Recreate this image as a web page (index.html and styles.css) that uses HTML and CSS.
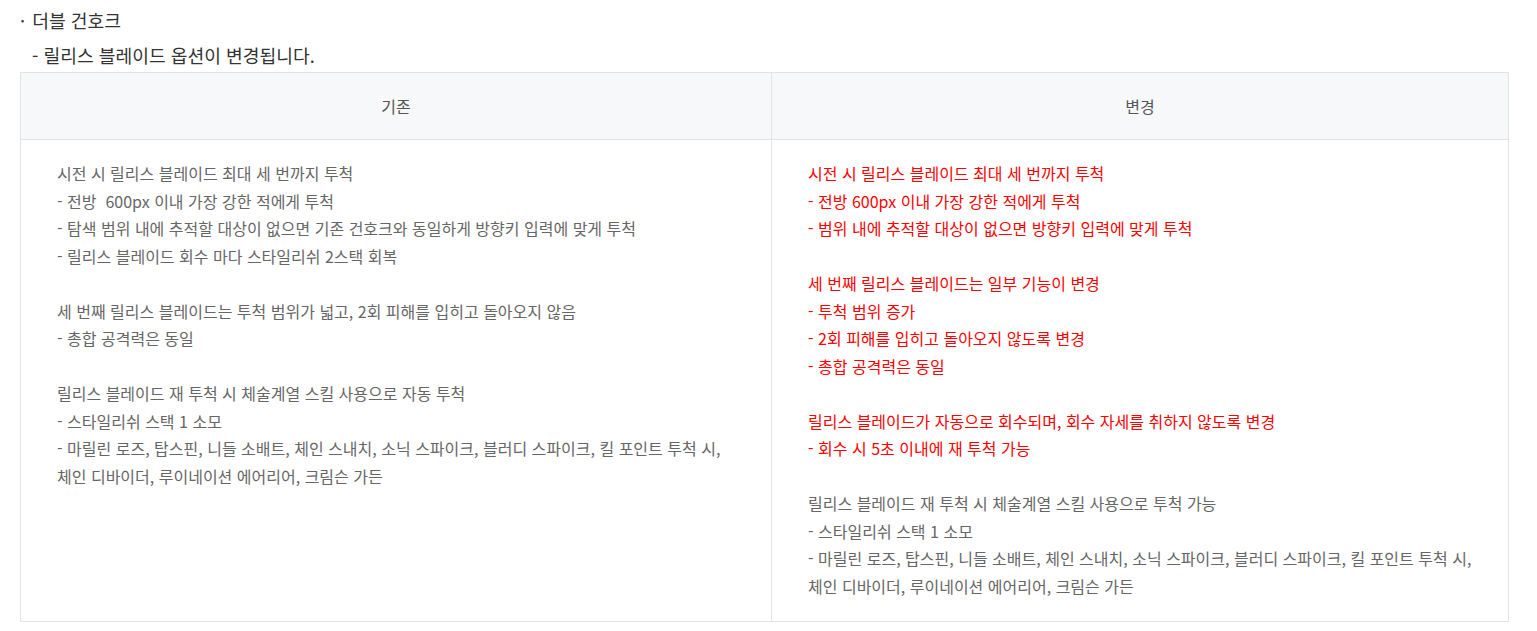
FILE: index.html
```html
<!DOCTYPE html>
<html lang="ko">
<head>
<meta charset="utf-8">
<link rel="stylesheet" href="styles.css">
</head>
<body>
<div class="wrap">
  <p class="title"><span class="dot">·</span> 더블 건호크</p>
  <p class="sub">- 릴리스 블레이드 옵션이 변경됩니다.</p>
  <table class="cmp">
    <thead>
      <tr><th class="col-a">기존</th><th>변경</th></tr>
    </thead>
    <tbody>
      <tr>
        <td class="col-a">
          <p>시전 시 릴리스 블레이드 최대 세 번까지 투척</p>
          <p>- 전방&nbsp; 600px 이내 가장 강한 적에게 투척</p>
          <p>- 탐색 범위 내에 추적할 대상이 없으면 기존 건호크와 동일하게 방향키 입력에 맞게 투척</p>
          <p>- 릴리스 블레이드 회수 마다 스타일리쉬 2스택 회복</p>
          <p>&nbsp;</p>
          <p>세 번째 릴리스 블레이드는 투척 범위가 넓고, 2회 피해를 입히고 돌아오지 않음</p>
          <p>- 총합 공격력은 동일</p>
          <p>&nbsp;</p>
          <p>릴리스 블레이드 재 투척 시 체술계열 스킬 사용으로 자동 투척</p>
          <p>- 스타일리쉬 스택 1 소모</p>
          <p>- 마릴린 로즈, 탑스핀, 니들 소배트, 체인 스내치, 소닉 스파이크, 블러디 스파이크, 킬 포인트 투척 시,<br>체인 디바이더, 루이네이션 에어리어, 크림슨 가든</p>
        </td>
        <td>
          <p class="red">시전 시 릴리스 블레이드 최대 세 번까지 투척</p>
          <p class="red">- 전방 600px 이내 가장 강한 적에게 투척</p>
          <p class="red">- 범위 내에 추적할 대상이 없으면 방향키 입력에 맞게 투척</p>
          <p>&nbsp;</p>
          <p class="red">세 번째 릴리스 블레이드는 일부 기능이 변경</p>
          <p class="red">- 투척 범위 증가</p>
          <p class="red">- 2회 피해를 입히고 돌아오지 않도록 변경</p>
          <p class="red">- 총합 공격력은 동일</p>
          <p>&nbsp;</p>
          <p class="red">릴리스 블레이드가 자동으로 회수되며, 회수 자세를 취하지 않도록 변경</p>
          <p class="red">- 회수 시 5초 이내에 재 투척 가능</p>
          <p>&nbsp;</p>
          <p>릴리스 블레이드 재 투척 시 체술계열 스킬 사용으로 투척 가능</p>
          <p>- 스타일리쉬 스택 1 소모</p>
          <p>- 마릴린 로즈, 탑스핀, 니들 소배트, 체인 스내치, 소닉 스파이크, 블러디 스파이크, 킬 포인트 투척 시,<br>체인 디바이더, 루이네이션 에어리어, 크림슨 가든</p>
        </td>
      </tr>
    </tbody>
  </table>
</div>
</body>
</html>
```

FILE: styles.css
```css
* { box-sizing: border-box; }
html, body {
  margin: 0;
  padding: 0;
  background: #ffffff;
}
body {
  font-family: "Noto Sans CJK KR", "Noto Sans", sans-serif;
  color: #333333;
}
.wrap {
  padding: 3px 0 0 20px;
}
.title, .sub {
  margin: 0;
  font-size: 18.2px;
  line-height: 35px;
  color: #333333;
}
.sub {
  line-height: 34px;
}
.dot {
  margin-right: 2px;
}
.sub {
  padding-left: 12px;
}
.cmp {
  width: 1489px;
  border-collapse: collapse;
  table-layout: fixed;
}
.cmp th, .cmp td {
  border: 1px solid #e1e3e8;
}
.cmp th {
  height: 67px;
  background: #f7f8fa;
  font-weight: 400;
  font-size: 16px;
  color: #555555;
  text-align: center;
  vertical-align: middle;
}
.cmp .col-a {
  width: 751px;
}
.cmp td {
  padding: 20px 20px 21px 36px;
  vertical-align: top;
  font-size: 16px;
  line-height: 27.5px;
  color: #666666;
}
.cmp td p {
  margin: 0;
}
.cmp td p.red {
  color: #ff0000;
}
```
